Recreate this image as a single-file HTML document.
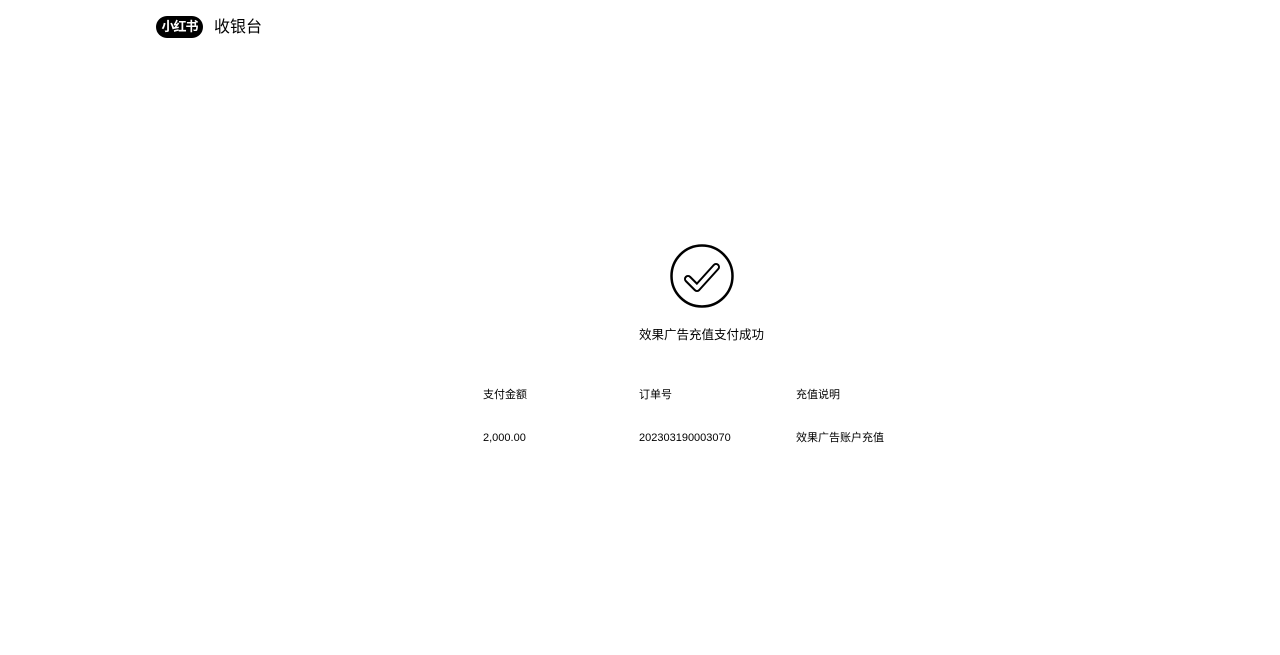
<!DOCTYPE html>
<html><head><meta charset="utf-8"><style>
body{margin:0;width:1280px;height:655px;background:#fff;font-family:"Liberation Sans","Noto Sans CJK SC",sans-serif;color:#000;position:relative;overflow:hidden}
.logo{position:absolute;left:156px;top:16px;width:47px;height:22px;background:#000;border-radius:11px;color:#fff;font-size:13px;font-weight:bold;line-height:22px;text-align:center;letter-spacing:-1px}
.t{position:absolute;white-space:nowrap;line-height:14px}
</style></head><body>
<div class="logo">小红书</div>
<div class="t" style="left:214px;top:19px;font-size:16px;line-height:18px">收银台</div>
<svg style="position:absolute;left:668px;top:243px" width="68" height="68" viewBox="0 0 68 68">
<circle cx="34" cy="33" r="30.5" fill="none" stroke="#000" stroke-width="2.5"/>
<path d="M20 36 L29 45 L48 24" fill="none" stroke="#000" stroke-width="8" stroke-linecap="round" stroke-linejoin="round"/>
<path d="M20 36 L29 45 L48 24" fill="none" stroke="#fff" stroke-width="4" stroke-linecap="round" stroke-linejoin="round"/>
</svg>
<div class="t" style="left:639px;top:328px;font-size:12.5px;line-height:14px">效果广告充值支付成功</div>
<div class="t" style="left:483px;top:388px;font-size:11px">支付金额</div>
<div class="t" style="left:639px;top:388px;font-size:11px">订单号</div>
<div class="t" style="left:796px;top:388px;font-size:11px">充值说明</div>
<div class="t" style="left:483px;top:431px;font-size:11px">2,000.00</div>
<div class="t" style="left:639px;top:431px;font-size:11px">202303190003070</div>
<div class="t" style="left:796px;top:431px;font-size:11px">效果广告账户充值</div>
</body></html>
